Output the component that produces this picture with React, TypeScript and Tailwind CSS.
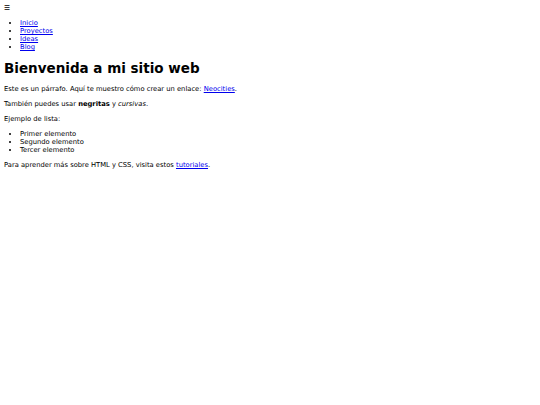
const navLinks = ['Inicio', 'Proyectos', 'Ideas', 'Blog'];
const items = ['Primer elemento', 'Segundo elemento', 'Tercer elemento'];

export default function App() {
  return (
    <div className="min-h-[405px] bg-white p-[4px] font-['DejaVu_Sans',sans-serif] text-[6.75px] leading-[8px] text-black">
      <header>
        <div>☰</div>
        <nav>
          <ul className="my-[7px] list-disc pl-[16px]">
            {navLinks.map((link) => (
              <li key={link}>
                <a href="#" className="text-[#0000ee] underline">
                  {link}
                </a>
              </li>
            ))}
          </ul>
        </nav>
      </header>

      <main>
        <h1 className="my-[9px] text-[13.5px] leading-[16px] font-bold">Bienvenida a mi sitio web</h1>
        <p className="my-[7px]">
          Este es un párrafo. Aquí te muestro cómo crear un enlace:{' '}
          <a href="#" className="text-[#0000ee] underline">
            Neocities
          </a>
          .
        </p>
        <p className="my-[7px]">
          También puedes usar <strong className="font-bold">negritas</strong> y <em>cursivas</em>.
        </p>
        <p className="my-[7px]">Ejemplo de lista:</p>
        <ul className="my-[7px] list-disc pl-[16px]">
          {items.map((item) => (
            <li key={item}>{item}</li>
          ))}
        </ul>
        <p className="my-[7px]">
          Para aprender más sobre HTML y CSS, visita estos{' '}
          <a href="#" className="text-[#0000ee] underline">
            tutoriales
          </a>
          .
        </p>
      </main>
    </div>
  );
}
